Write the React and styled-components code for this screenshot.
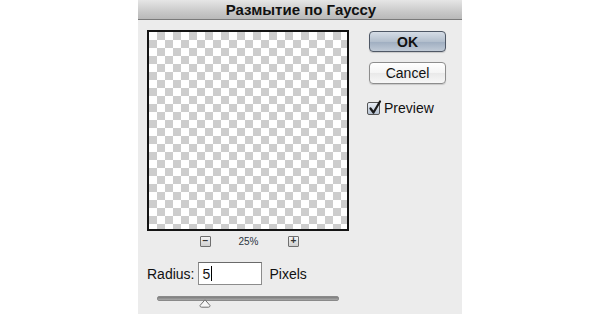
import React, { useState } from 'react'
import styled, { createGlobalStyle } from 'styled-components'

const Global = createGlobalStyle`
  html, body {
    margin: 0;
    padding: 0;
    background: #fff;
    width: 600px;
    height: 320px;
    overflow: hidden;
  }
  body {
    font-family: "Liberation Sans", Arial, sans-serif;
    color: #111;
  }
`

const Dialog = styled.div`
  margin-left: 138px;
  width: 324px;
  height: 314px;
  background: #ececec;
  display: flex;
  flex-direction: column;
`

const TitleBar = styled.div`
  height: 19px;
  border-bottom: 1px solid #7a7a7a;
  background: linear-gradient(#e6e6e6, #c9c9c9 60%, #b9b9b9);
  display: flex;
  align-items: center;
  justify-content: center;
  font-size: 15px;
  font-weight: bold;
  color: #111;
  padding-left: 2px;
`

const Body = styled.div`
  display: flex;
  padding: 10px 0 0 9px;
`

const LeftCol = styled.div`
  width: 203px;
  display: flex;
  flex-direction: column;
`

const Preview = styled.div`
  width: 198px;
  height: 197px;
  border: 2px solid #141414;
  background-color: #fff;
  background-image:
    linear-gradient(45deg, #cdcdcd 25%, transparent 25%, transparent 75%, #cdcdcd 75%),
    linear-gradient(45deg, #cdcdcd 25%, transparent 25%, transparent 75%, #cdcdcd 75%);
  background-size: 16px 16px;
  background-position: 0 0, 8px 8px;
`

const ZoomRow = styled.div`
  display: flex;
  align-items: center;
  height: 16px;
  margin-top: 2px;
  padding-left: 53px;
`

const ZoomBtn = styled.div`
  width: 9px;
  height: 9px;
  border: 1px solid #6f6f6f;
  border-radius: 1px;
  background: linear-gradient(#f4f4f4, #cfcfcf);
  display: flex;
  align-items: center;
  justify-content: center;
  font-size: 10px;
  line-height: 1;
  color: #333;
  font-weight: bold;
`

const ZoomLabel = styled.span`
  font-size: 10px;
  color: #2b3440;
  width: 75px;
  text-align: center;
  padding-right: 2px;
`

const RadiusRow = styled.div`
  display: flex;
  align-items: center;
  margin-top: 13px;
  padding-left: 0;
  font-size: 14px;
`

const Label = styled.span`
  margin-right: 4px;
`

const Field = styled.div`
  width: 59px;
  height: 21px;
  border: 1px solid #8c8c8c;
  border-top-color: #6a6a6a;
  background: #fff;
  display: flex;
  align-items: center;
  padding-left: 3px;
  box-sizing: content-box;
  margin-right: 7px;
  font-size: 14px;
`

const Caret = styled.span`
  width: 1px;
  height: 15px;
  background: #000;
  margin-left: 1px;
`

const SliderWrap = styled.div`
  position: relative;
  margin: 11px 0 0 10px;
  width: 182px;
  height: 12px;
`

const Track = styled.div`
  height: 3px;
  border-radius: 2px;
  background: linear-gradient(#7d7d7d, #a9a9a9);
  border: 1px solid #8a8a8a;
`

const Thumb = styled.svg`
  position: absolute;
  top: 3px;
  left: 42px;
`

const RightCol = styled.div`
  display: flex;
  flex-direction: column;
  padding-left: 19px;
  padding-top: 1px;
`

const Button = styled.button`
  width: 77px;
  height: ${p => (p.$primary ? '21px' : '22px')};
  margin-bottom: ${p => (p.$primary ? '10px' : '16px')};
  border-radius: 4px;
  border: 1px solid ${p => (p.$primary ? '#4f5866' : '#8d8d8d')};
  background: ${p =>
    p.$primary
      ? 'linear-gradient(#d6dde6, #b3bfcd 50%, #9eadc0 51%, #c0cad6)'
      : 'linear-gradient(#ffffff, #f4f4f4 50%, #e9e9e9 51%, #f7f7f7)'};
  font-family: "Liberation Sans", Arial, sans-serif;
  font-size: 14px;
  font-weight: ${p => (p.$primary ? 'bold' : 'normal')};
  color: #111;
  padding: 0;
  box-shadow: 0 1px 1px rgba(0, 0, 0, 0.15);
`

const Check = styled.label`
  display: flex;
  align-items: center;
  font-size: 14px;
  margin-left: -2px;
`

const Box = styled.span`
  width: 11px;
  height: 11px;
  border: 1px solid #555;
  border-radius: 2px;
  background: linear-gradient(#e9eef5, #b7c3d3);
  margin-right: 4px;
  position: relative;
`

const Tick = styled.svg`
  position: absolute;
  left: 0;
  top: -3px;
`

export default function App() {
  const [radius] = useState('5')

  return (
    <>
      <Global />
      <Dialog>
        <TitleBar>Размытие по Гауссу</TitleBar>
        <Body>
          <LeftCol>
            <Preview />
            <ZoomRow>
              <ZoomBtn>−</ZoomBtn>
              <ZoomLabel>25%</ZoomLabel>
              <ZoomBtn>+</ZoomBtn>
            </ZoomRow>
            <RadiusRow>
              <Label>Radius:</Label>
              <Field>
                {radius}
                <Caret />
              </Field>
              <span>Pixels</span>
            </RadiusRow>
            <SliderWrap>
              <Track />
              <Thumb width="12" height="9" viewBox="0 0 12 9">
                <path d="M6 0.8 L11 6.5 Q11 8.2 9.5 8.2 L2.5 8.2 Q1 8.2 1 6.5 Z" fill="#f5f5f5" stroke="#707070" strokeWidth="1" />
              </Thumb>
            </SliderWrap>
          </LeftCol>
          <RightCol>
            <Button $primary>OK</Button>
            <Button>Cancel</Button>
            <Check>
              <Box>
                <Tick width="14" height="15" viewBox="0 0 14 15">
                  <path d="M2.5 8.5 L5.5 12.5 L12 1.5" fill="none" stroke="#1a1a1a" strokeWidth="2.2" strokeLinecap="round" strokeLinejoin="round" />
                </Tick>
              </Box>
              Preview
            </Check>
          </RightCol>
        </Body>
      </Dialog>
    </>
  )
}
